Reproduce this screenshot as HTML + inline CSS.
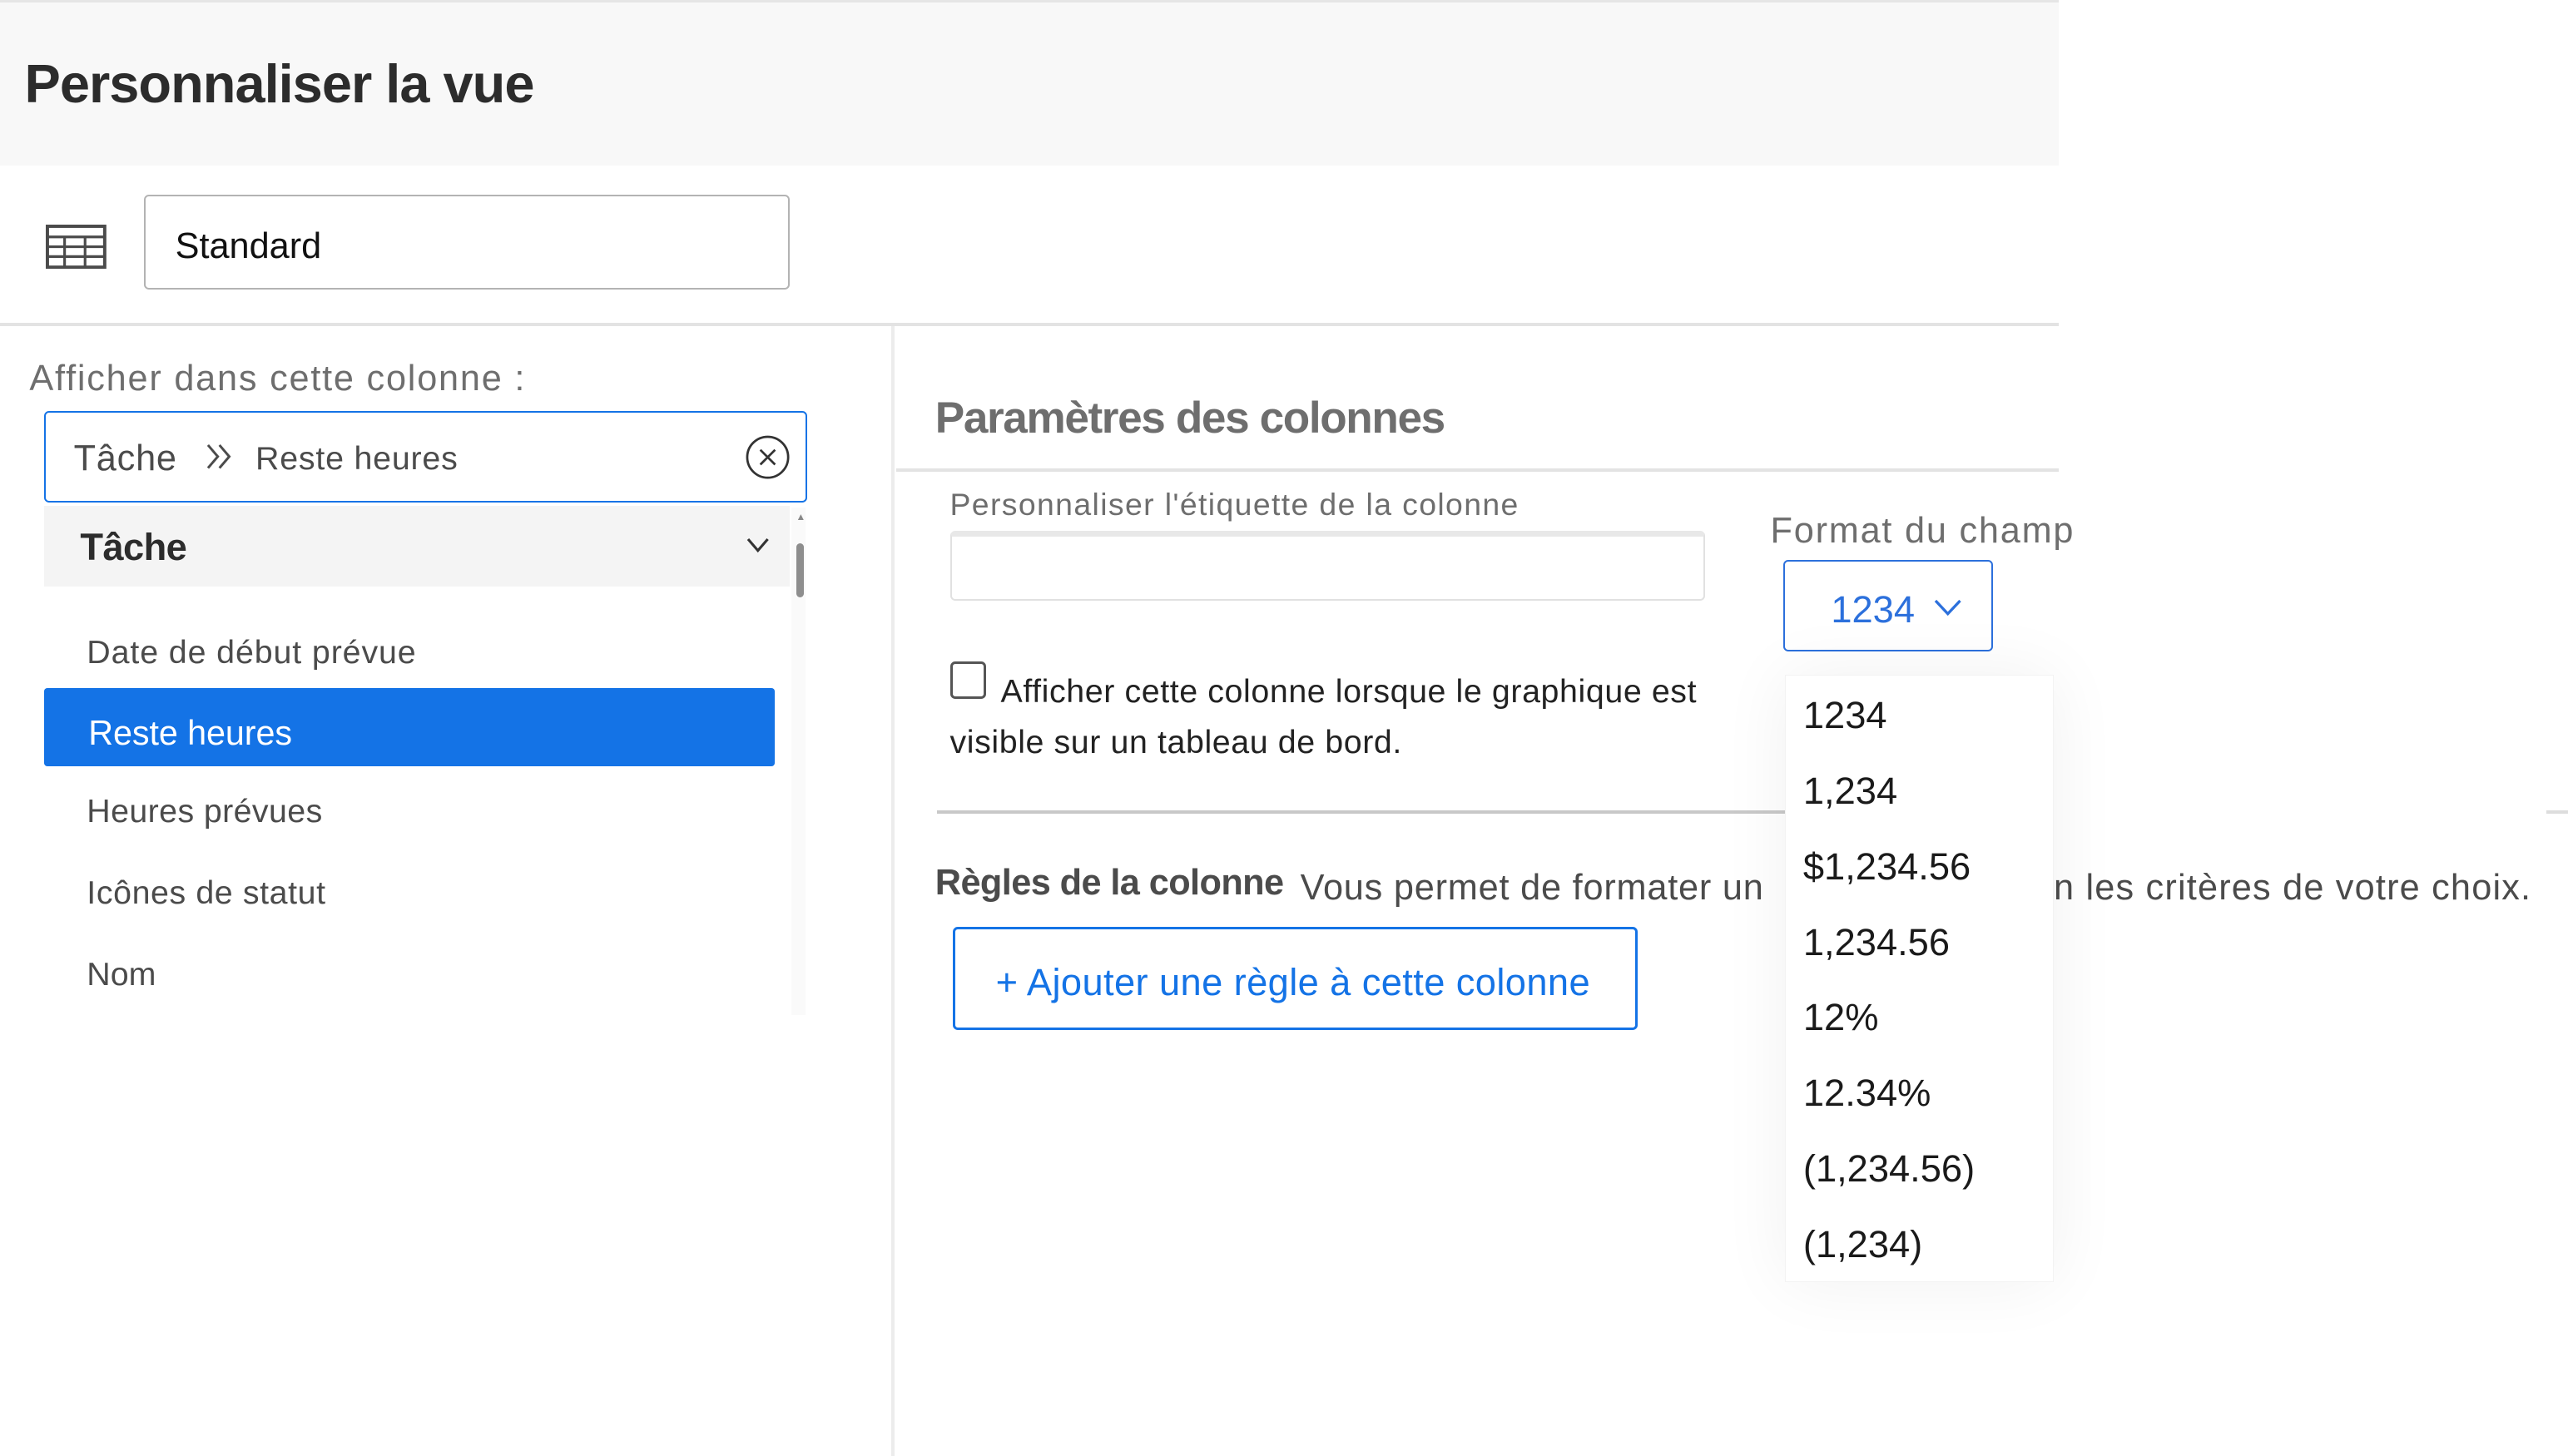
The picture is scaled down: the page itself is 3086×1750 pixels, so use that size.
<!DOCTYPE html>
<html><head><meta charset="utf-8"><style>
html,body{margin:0;padding:0;background:#fff;overflow:hidden}
#w{position:relative;width:1568px;height:889.2px;zoom:1.96811;font-family:"Liberation Sans",sans-serif;color:#2c2c2c;overflow:hidden}
.a{position:absolute;white-space:nowrap}
.ln{position:absolute;background:#e3e3e3}
</style></head><body><div id="w">
<div class="a" style="left:0;top:0;width:1257px;height:101px;background:#f8f8f8;border-top:2px solid #e6e6e6;box-sizing:border-box"></div>
<div class="a" style="left:15px;top:32px;font-size:33px;font-weight:bold;color:#2c2c2c;letter-spacing:-0.5px">Personnaliser la vue</div>
<svg class="a" style="left:28px;top:137px" width="37" height="27" viewBox="0 0 37 27"><rect x="1" y="1" width="35" height="25" fill="none" stroke="#4b4b4b" stroke-width="2"/><path d="M1 7.5H36M1 13.5H36M1 19.5H36M11.5 7.5V26M24 7.5V26" stroke="#4b4b4b" stroke-width="1.6"/></svg>
<div class="a" style="left:88px;top:119px;width:392px;height:56px;border:1.5px solid #b3b3b3;border-radius:3px;background:#fff"></div>
<div class="a" style="left:107px;top:138px;font-size:22px;color:#111">Standard</div>
<div class="ln" style="left:0;top:197px;width:1257px;height:2px"></div>
<div class="ln" style="left:544px;top:199px;width:2px;height:690px;background:#ececec"></div>
<div class="a" style="left:18px;top:219px;font-size:22px;color:#6e6e6e;letter-spacing:0.9px">Afficher dans cette colonne :</div>
<div class="a" style="left:27px;top:251px;width:464px;height:54px;border:1.5px solid #1473e6;border-radius:3px"></div>
<div class="a" style="left:45px;top:268px;font-size:22px;color:#4b4b4b;letter-spacing:0.4px">Tâche</div>
<svg class="a" style="left:125px;top:271px" width="18" height="16"><path d="M2 1L8 8L2 15M9 1L15 8L9 15" fill="none" stroke="#4b4b4b" stroke-width="1.5"/></svg>
<div class="a" style="left:156px;top:269px;font-size:20px;color:#4b4b4b;letter-spacing:0.4px">Reste heures</div>
<svg class="a" style="left:455px;top:265px" width="28" height="28"><circle cx="14" cy="14" r="12.5" fill="none" stroke="#333" stroke-width="1.4"/><path d="M9.5 9.5L18.5 18.5M18.5 9.5L9.5 18.5" stroke="#333" stroke-width="1.4"/></svg>
<div class="a" style="left:27px;top:309px;width:455px;height:49px;background:#f4f4f4"></div>
<div class="a" style="left:49px;top:321px;font-size:23px;color:#2c2c2c;font-weight:bold;letter-spacing:-0.3px">Tâche</div>
<svg class="a" style="left:456px;top:328px" width="14" height="10"><path d="M1 1L7 8L13 1" fill="none" stroke="#333" stroke-width="1.6"/></svg>
<div class="a" style="left:483px;top:310px;width:9px;height:310px;background:#fafafa"></div>
<div class="a" style="left:486px;top:332px;width:5px;height:33px;background:#8e8e8e;border-radius:3px"></div>
<div class="a" style="left:486px;top:312px;font-size:6px;color:#888">▲</div>
<div class="a" style="left:53px;top:387px;font-size:20px;color:#4b4b4b;letter-spacing:0.45px">Date de début prévue</div>
<div class="a" style="left:27px;top:420px;width:446px;height:48px;background:#1473e6;border-radius:2px"></div>
<div class="a" style="left:54px;top:436px;font-size:21px;color:#fff;letter-spacing:-0.05px">Reste heures</div>
<div class="a" style="left:53px;top:484px;font-size:20px;color:#4b4b4b;letter-spacing:0.2px">Heures prévues</div>
<div class="a" style="left:53px;top:534px;font-size:20px;color:#4b4b4b;letter-spacing:0.3px">Icônes de statut</div>
<div class="a" style="left:53px;top:584px;font-size:20px;color:#4b4b4b">Nom</div>
<div class="a" style="left:571px;top:240px;font-size:27px;font-weight:bold;color:#6e6e6e;letter-spacing:-0.7px">Paramètres des colonnes</div>
<div class="ln" style="left:547px;top:286px;width:710px;height:2px"></div>
<div class="a" style="left:580px;top:297px;font-size:19px;color:#6e6e6e;letter-spacing:0.7px">Personnaliser l'étiquette de la colonne</div>
<div class="a" style="left:580px;top:324px;width:461px;height:43px;border:1.5px solid #e1e1e1;border-top:4px solid #e8e8e8;border-radius:3px;box-sizing:border-box"></div>
<div class="a" style="left:580px;top:404px;width:22px;height:23px;border:1.7px solid #555;border-radius:3px;box-sizing:border-box"></div>
<div class="a" style="left:611px;top:411px;font-size:20px;color:#222;letter-spacing:0.3px">Afficher cette colonne lorsque le graphique est</div>
<div class="a" style="left:580px;top:442px;font-size:20px;color:#222;letter-spacing:0.3px">visible sur un tableau de bord.</div>
<div class="ln" style="left:572px;top:495px;width:520px;height:2px;background:#c8c8c8"></div>
<div class="ln" style="left:1555px;top:495px;width:13px;height:2px;background:#ddd"></div>
<div class="a" style="left:571px;top:527px;font-size:22px;font-weight:bold;color:#4b4b4b;letter-spacing:-0.3px">Règles de la colonne</div>
<div class="a" style="left:794px;top:530px;font-size:22px;color:#4b4b4b;letter-spacing:0.4px">Vous permet de formater un</div>
<div class="a" style="left:1254px;top:530px;font-size:22px;color:#4b4b4b;letter-spacing:0.6px">n les critères de votre choix.</div>
<div class="a" style="left:582px;top:566px;width:415px;height:60px;border:2px solid #1473e6;border-radius:3px"></div>
<div class="a" style="left:608px;top:587px;font-size:23px;color:#1473e6;letter-spacing:0.2px">+ Ajouter une règle à cette colonne</div>
<div class="a" style="left:1081px;top:312px;font-size:22px;color:#6e6e6e;letter-spacing:0.9px">Format du champ</div>
<div class="a" style="left:1089px;top:342px;width:128px;height:56px;border:1.5px solid #2c70dc;border-radius:3px;box-sizing:border-box"></div>
<div class="a" style="left:1118px;top:359px;font-size:23px;color:#2c70dc">1234</div>
<svg class="a" style="left:1181px;top:366px" width="17" height="11"><path d="M1 1L8.5 9L16 1" fill="none" stroke="#2c70dc" stroke-width="1.7"/></svg>
<div class="a" style="left:1090px;top:412px;width:163px;height:370px;background:#fff;box-shadow:0 0 40px rgba(0,0,0,0.06);border:1px solid #f3f3f3"></div>
<div class="a" style="left:1101px;top:414px;font-size:23px;line-height:46.2px;color:#1a1a1a;white-space:pre">1234
1,234
$1,234.56
1,234.56
12%
12.34%
(1,234.56)
(1,234)</div>
</div></body></html>
